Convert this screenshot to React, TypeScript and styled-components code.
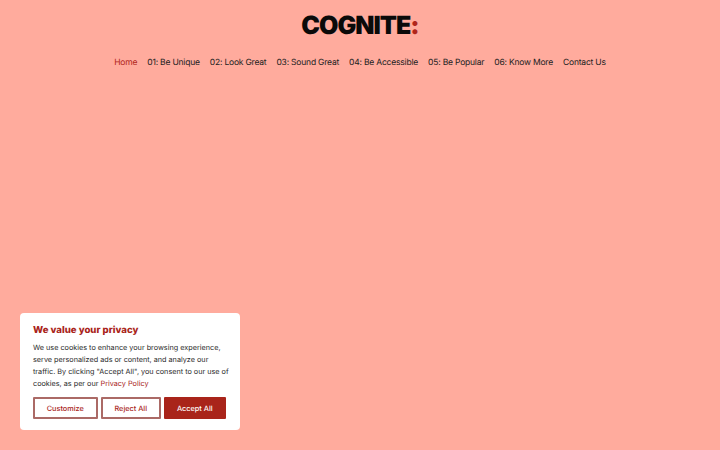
import React from 'react';
import styled, { createGlobalStyle } from 'styled-components';

const NAV_ITEMS = [
    'Home',
    '01: Be Unique',
    '02: Look Great',
    '03: Sound Great',
    '04: Be Accessible',
    '05: Be Popular',
    '06: Know More',
    'Contact Us',
];

const App: React.FC = () => (
    <>
        <GlobalStyle />
        <Header>
            <Logo>COGNITE<LogoMark>:</LogoMark></Logo>
            <Nav>
                {NAV_ITEMS.map((item, key) =>
                    <NavLink key={key} href="#" $active={key === 0}>{item}</NavLink>
                )}
            </Nav>
        </Header>

        <CookieBanner>
            <CookieTitle>We value your privacy</CookieTitle>
            <CookieText>
                We use cookies to enhance your browsing experience,<br />
                serve personalized ads or content, and analyze our<br />
                traffic. By clicking "Accept All", you consent to our use of<br />
                cookies, as per our <PolicyLink href="#">Privacy Policy</PolicyLink>
            </CookieText>
            <CookieButtons>
                <CookieButton $width={64.5}>Customize</CookieButton>
                <CookieButton $width={59.5}>Reject All</CookieButton>
                <CookieButton $width={61.5} $primary>Accept All</CookieButton>
            </CookieButtons>
        </CookieBanner>
    </>
);

const GlobalStyle = createGlobalStyle`
    html, body {
        margin: 0;
        height: 100%;
        background: #ffab9d;
        font-family: Inter, "Liberation Sans", sans-serif;
        text-rendering: geometricPrecision;
    }
`;

const Header = styled.header`
    display: flex;
    flex-direction: column;
    align-items: center;
`;

const Logo = styled.div`
    margin-top: 11px;
    height: 30px;
    line-height: 30px;
    font-size: 25px;
    font-weight: 900;
    letter-spacing: -1px;
    color: #0a0a0a;
`;

const LogoMark = styled.span`
    color: #b1251a;
`;

const Nav = styled.nav`
    display: flex;
    justify-content: center;
    gap: 10px;
    margin-top: 12px;
`;

const NavLink = styled.a<{ $active?: boolean }>`
    font-size: 8.5px;
    letter-spacing: -0.2px;
    line-height: 20px;
    white-space: nowrap;
    text-decoration: none;
    color: ${({ $active }) => ($active ? '#b1251a' : '#222222')};
`;

const CookieBanner = styled.aside`
    position: fixed;
    left: 20px;
    bottom: 20px;
    box-sizing: border-box;
    width: 220px;
    height: 117px;
    padding: 11px 13px;
    background: #ffffff;
    border-radius: 4px;
`;

const CookieTitle = styled.h2`
    margin: 0 0 4px;
    font-size: 9.6px;
    line-height: 14px;
    font-weight: 800;
    color: #a9241a;
`;

const CookieText = styled.p`
    margin: 0 0 7px;
    font-size: 7.25px;
    line-height: 12px;
    white-space: nowrap;
    color: #2b2b2b;
`;

const PolicyLink = styled.a`
    color: #a9241a;
    text-decoration: none;
`;

const CookieButtons = styled.div`
    display: flex;
    gap: 3.5px;
`;

const CookieButton = styled.button<{ $primary?: boolean; $width: number }>`
    box-sizing: border-box;
    width: ${({ $width }) => $width}px;
    height: 22px;
    padding: 0;
    font-family: inherit;
    font-size: 7.3px;
    font-weight: 500;
    text-rendering: geometricPrecision;
    border-radius: 1px;
    border: 2px solid ${({ $primary }) => ($primary ? '#a9241a' : '#ab6a66')};
    background: ${({ $primary }) => ($primary ? '#a9241a' : '#ffffff')};
    color: ${({ $primary }) => ($primary ? '#ffffff' : '#a9241a')};
`;

export default App;
